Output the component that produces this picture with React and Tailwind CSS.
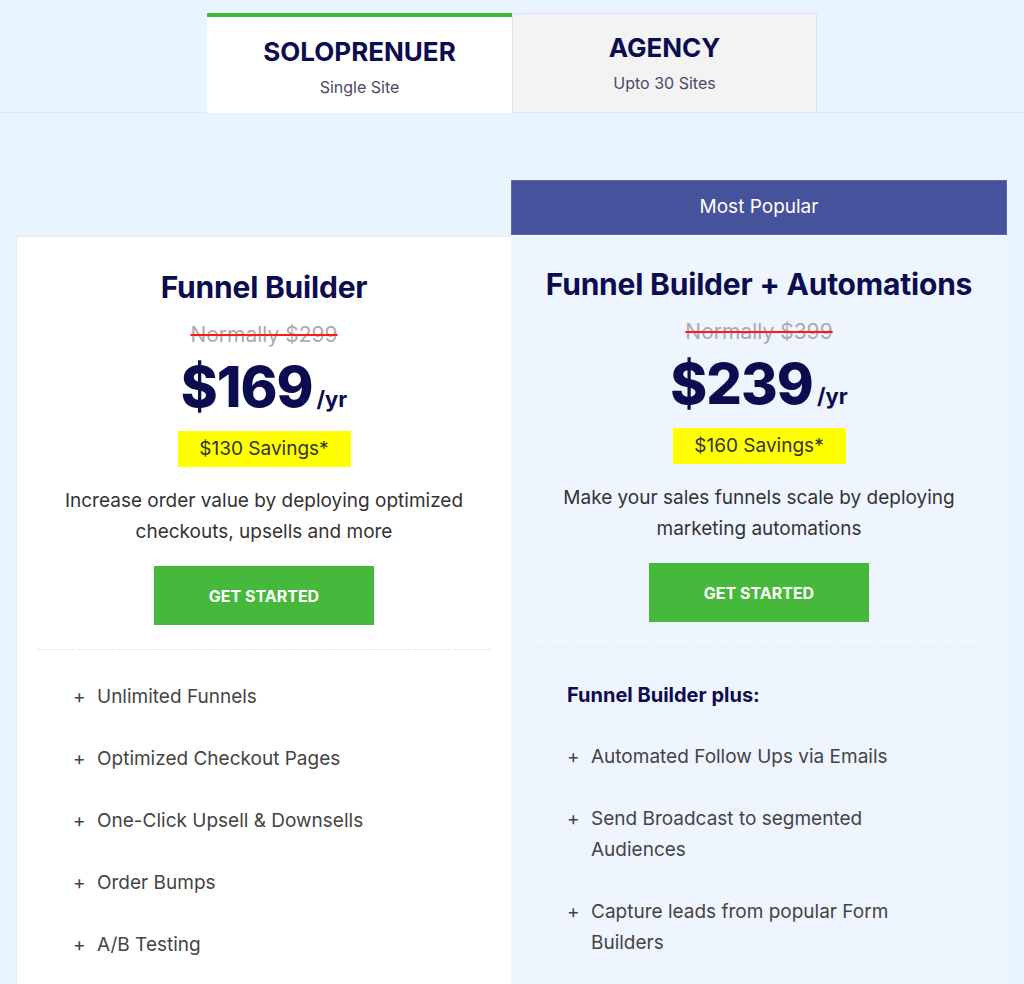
const plans = [
  {
    title: 'Funnel Builder',
    normal: 'Normally $299',
    price: '$169',
    savings: '$130 Savings*',
    desc: ['Increase order value by deploying optimized', 'checkouts, upsells and more'],
    features: [
      ['Unlimited Funnels'],
      ['Optimized Checkout Pages'],
      ['One-Click Upsell & Downsells'],
      ['Order Bumps'],
      ['A/B Testing'],
    ],
  },
  {
    title: 'Funnel Builder + Automations',
    normal: 'Normally $399',
    price: '$239',
    savings: '$160 Savings*',
    desc: ['Make your sales funnels scale by deploying', 'marketing automations'],
    lead: 'Funnel Builder plus:',
    features: [
      ['Automated Follow Ups via Emails'],
      ['Send Broadcast to segmented', 'Audiences'],
      ['Capture leads from popular Form', 'Builders'],
    ],
  },
];

function PlanCard({ plan, popular }) {
  return (
    <div
      className={`flex flex-col items-center h-full ${popular ? 'bg-[#eff5fe]' : 'bg-white border-l border-t border-[#e3ebf7]'}`}
    >
      <h2 className={`${popular ? 'mt-[31px]' : 'mt-[32px]'} text-[30px] leading-[36px] font-bold text-[#0c0c50] tracking-[-0.2px]`}>
        {plan.title}
      </h2>
      <div className="mt-[18px] text-[21px] leading-[24px] text-[#aaaaaa] line-through decoration-[#ff1a1a] decoration-2">
        {plan.normal}
      </div>
      <div className="mt-[8px] h-[64px] flex items-baseline text-[#0c0c50]">
        <span className="text-[56px] leading-[64px] font-extrabold tracking-[-1px]">{plan.price}</span>
        <span className="ml-[4px] text-[22px] font-bold">/yr</span>
      </div>
      <div className="mt-[12px] bg-[#ffff00] w-[173px] h-[36px] flex items-center justify-center text-[19px] text-[#333333]">
        {plan.savings}
      </div>
      <div className="mt-[18px] text-center text-[19px] leading-[31px] text-[#333333]">
        {plan.desc.map((d) => (
          <div key={d}>{d}</div>
        ))}
      </div>
      <button className="mt-[19px] w-[220px] h-[59px] bg-[#46b83c] text-white text-[16px] font-bold">
        GET STARTED
      </button>
      <div className="mt-[24px] w-[calc(100%-40px)] border-t border-dashed border-[#e6e9ee]" />
      <div className={`w-full pl-[56px] ${popular ? 'pt-[36px]' : 'pt-[31px]'} flex flex-col`}>
        {plan.lead && (
          <div className="mb-[34px] text-[20px] leading-[24px] font-bold text-[#0c0c50]">{plan.lead}</div>
        )}
        <div className="flex flex-col gap-[31px]">
          {plan.features.map((f) => (
            <div key={f[0]} className="flex text-[19px] leading-[31px] text-[#444444]">
              <span className="w-[24px] shrink-0">+</span>
              <div>
                {f.map((line) => (
                  <div key={line}>{line}</div>
                ))}
              </div>
            </div>
          ))}
        </div>
      </div>
    </div>
  );
}

export default function App() {
  return (
    <div className="w-[1024px] h-[984px] overflow-hidden bg-[#e8f5fe] font-['Inter',sans-serif]">
      <div className="pt-[13px] border-b border-[#dbe6f6] flex justify-center">
        <div className="w-[305px] h-[100px] bg-white border-t-[4px] border-[#44b839] flex flex-col items-center -mb-px">
          <div className="mt-[19px] text-[26px] leading-[32px] font-bold text-[#0c0c50]">SOLOPRENUER</div>
          <div className="mt-[9px] text-[16px] leading-[20px] text-[#4a4a68]">Single Site</div>
        </div>
        <div className="w-[305px] h-[99px] bg-[#f3f3f3] border border-b-0 border-[#dde4f5] flex flex-col items-center">
          <div className="mt-[18px] text-[26px] leading-[32px] font-bold text-[#0c0c50]">AGENCY</div>
          <div className="mt-[9px] text-[16px] leading-[20px] text-[#4a4a68]">Upto 30 Sites</div>
        </div>
      </div>
      <div className="mt-[67px] pl-[16px] pr-[17px] flex">
        <div className="w-[495px] pt-[56px]">
          <div className="h-[760px]">
            <PlanCard plan={plans[0]} />
          </div>
        </div>
        <div className="w-[496px]">
          <div className="h-[55px] bg-[#46529b] border border-[#5b66ad] flex items-center justify-center text-white text-[19px]">
            Most Popular
          </div>
          <div className="h-[760px]">
            <PlanCard plan={plans[1]} popular />
          </div>
        </div>
      </div>
    </div>
  );
}
